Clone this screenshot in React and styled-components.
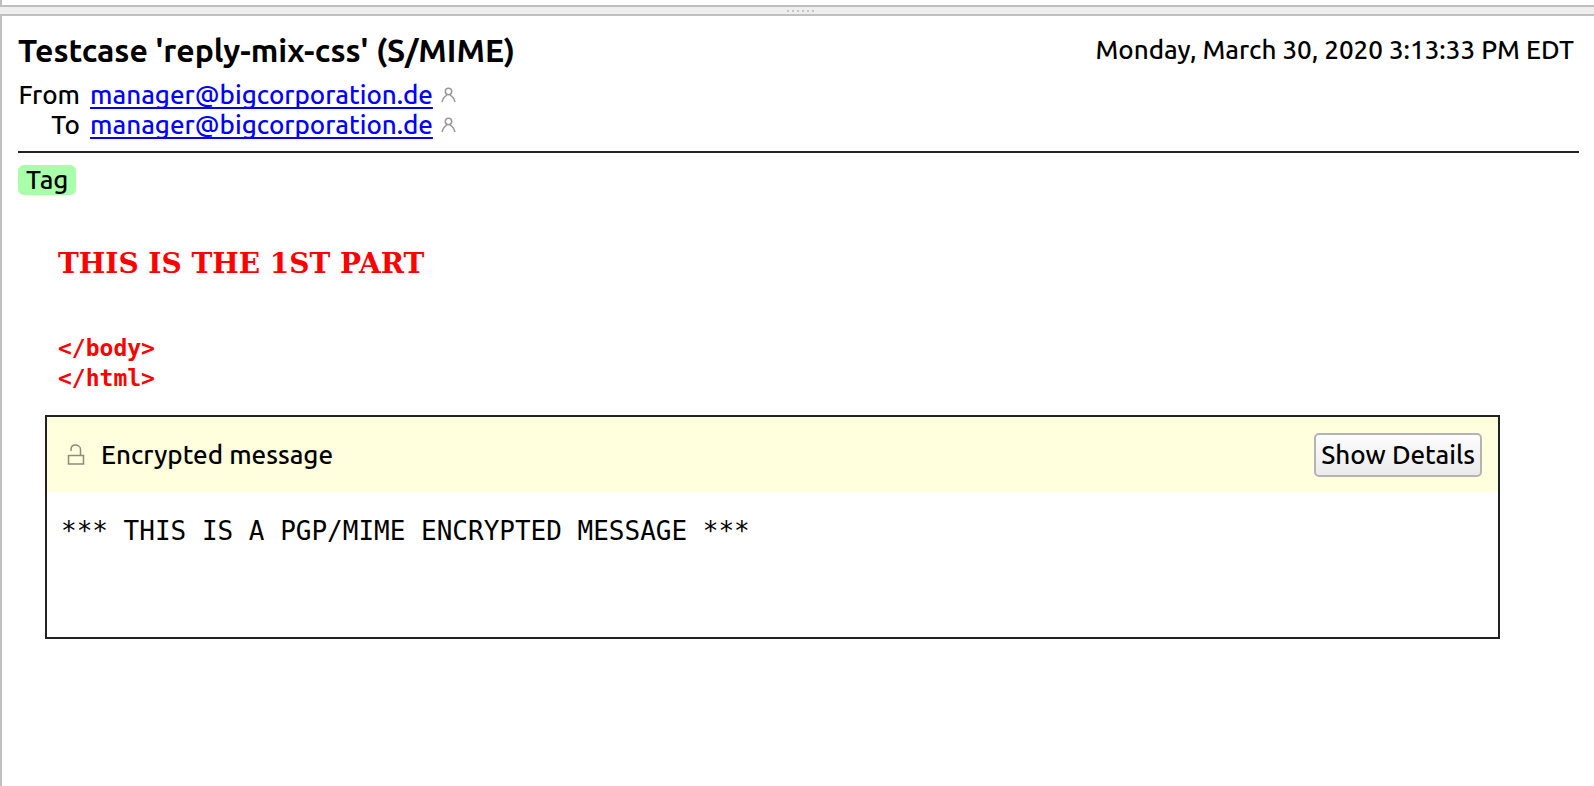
import React from "react";
import styled, { createGlobalStyle } from "styled-components";

const GlobalStyle = createGlobalStyle`
  * { box-sizing: border-box; }
  body { margin: 0; background: #eeeeee; color: #000; }
`;

const Page = styled.div`
  display: flex;
  flex-direction: column;
  min-height: 100vh;
  font: 500 26px/30px Ubuntu, "Noto Sans", sans-serif;
`;

const ListPane = styled.div`
  height: 7px;
  background: #fff;
  border: solid #bfbfbf;
  border-width: 0 0 2px 2px;
`;

const Splitter = styled.div`
  display: flex;
  justify-content: center;
  align-items: center;
  gap: 3px;
  height: 7px;
  padding-left: 6px;
`;

const GripDot = styled.span`
  width: 2px;
  height: 2px;
  background: #c4c4c4;
`;

const MessagePane = styled.main`
  flex: 1;
  padding: 16px 15px 0 16px;
  background: #fff;
  border: solid #bfbfbf;
  border-width: 2px 0 0 2px;
`;

const Header = styled.header`
  padding-bottom: 11px;
  border-bottom: 2px solid #222;
`;

const TitleRow = styled.div`
  display: flex;
  justify-content: space-between;
  align-items: flex-start;
  height: 48px;
  padding-right: 5px;
  line-height: 36px;
`;

const Title = styled.h1`
  margin: 0;
  font-size: 32px;
  font-weight: 700;
`;

const Addresses = styled.dl`
  display: grid;
  grid-template-columns: 62px auto;
  column-gap: 10px;
  margin: 0;
`;

const Label = styled.dt`
  text-align: right;
`;

const Address = styled.dd`
  display: flex;
  align-items: center;
  gap: 8px;
  margin: 0;
`;

const MailLink = styled.a`
  color: #0000ff;
  text-decoration: underline 2px;
  text-underline-offset: 3px;
  text-decoration-skip-ink: none;
`;

const Tag = styled.span`
  display: block;
  width: fit-content;
  margin-top: 12px;
  padding: 0 8px;
  border-radius: 6px;
  background: #aaffaa;
`;

const FirstPart = styled.section`
  padding: 52px 40px 0;
  color: #ff0000;
  font-weight: 700;
`;

const PartHeading = styled.h2`
  margin: 0;
  font: 700 28px/34px "DejaVu Serif", serif;
`;

const Source = styled.pre`
  margin: 52px 0 0;
  font: 700 23px/30px "DejaVu Sans Mono", monospace;
`;

const EncryptedBox = styled.section`
  margin: 22px 79px 0 27px;
  border: 2px solid #222;
`;

const EncryptedBar = styled.div`
  display: flex;
  align-items: center;
  height: 75px;
  padding: 0 16px 0 20px;
  gap: 16px;
  background: #ffffdd;
`;

const BarTitle = styled.span`
  flex: 1;
`;

const DetailsButton = styled.button`
  height: 44px;
  padding: 0 5px;
  border: 2px solid #b4b4b4;
  border-radius: 5px;
  background: linear-gradient(#fdfdfd, #ebebeb);
  color: #000;
  font: inherit;
`;

const Body = styled.pre`
  min-height: 145px;
  margin: 0;
  padding: 24px 14px;
  font: 26px/30px "DejaVu Sans Mono", monospace;
`;

const PersonIcon = () => (
  <svg width="15" height="16" viewBox="0 0 15 16" fill="none" stroke="#999" aria-hidden="true">
    <circle cx="7.5" cy="4.5" r="3.2" strokeWidth="1.5" />
    <path d="M1 15C1.8 11.8 3.6 9.4 6 8.2M9 8.2C11.4 9.4 13.2 11.8 14 15" strokeWidth="1.5" />
  </svg>
);

const LockIcon = () => (
  <svg width="18" height="22" viewBox="0 0 18 22" fill="none" stroke="#8c8c7c" strokeWidth="1.5" aria-hidden="true">
    <path d="M1.5 11.5H16.5V20H1.5Z" />
    <path d="M4 7V5.5C4 2.8 5.8 1 8.5 1S13.5 2.8 13.5 5.5V11.5" />
  </svg>
);

const people = [
  ["From", "manager@bigcorporation.de"],
  ["To", "manager@bigcorporation.de"],
];

export default function App() {
  return (
    <Page>
      <GlobalStyle />
      <ListPane />
      <Splitter>
        {[0, 1, 2, 3, 4, 5].map((n) => <GripDot key={n} />)}
      </Splitter>
      <MessagePane>
        <Header>
          <TitleRow>
            <Title>Testcase 'reply-mix-css' (S/MIME)</Title>
            <time dateTime="2020-03-30T15:13:33-04:00">Monday, March 30, 2020 3:13:33 PM EDT</time>
          </TitleRow>
          <Addresses>
            {people.map(([label, mail]) => (
              <React.Fragment key={label}>
                <Label>{label}</Label>
                <Address>
                  <MailLink href={`mailto:${mail}`}>{mail}</MailLink>
                  <PersonIcon />
                </Address>
              </React.Fragment>
            ))}
          </Addresses>
        </Header>
        <Tag>Tag</Tag>
        <FirstPart>
          <PartHeading>THIS IS THE 1ST PART</PartHeading>
          <Source>{"</body>\n</html>"}</Source>
        </FirstPart>
        <EncryptedBox>
          <EncryptedBar>
            <LockIcon />
            <BarTitle>Encrypted message</BarTitle>
            <DetailsButton type="button">Show Details</DetailsButton>
          </EncryptedBar>
          <Body>*** THIS IS A PGP/MIME ENCRYPTED MESSAGE ***</Body>
        </EncryptedBox>
      </MessagePane>
    </Page>
  );
}
